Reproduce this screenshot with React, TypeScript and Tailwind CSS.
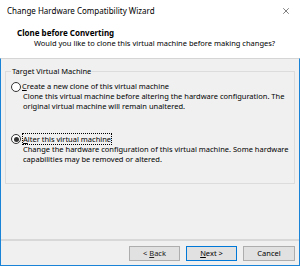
import { X } from "lucide-react";

export default function App() {
  return (
    <div className="flex h-[266px] w-[300px] flex-col bg-[#f0f0f0] font-['Segoe_UI','Noto_Sans',sans-serif] text-[7.5px] text-black">
      {/* title bar + wizard header */}
      <div className="h-[58px] bg-white">
        <div className="flex h-[22px] items-center justify-between pl-[7px] pr-[9px]">
          <span className="text-[8px]">Change Hardware Compatibility Wizard</span>
          <X size={10} strokeWidth={1.2} />
        </div>
        <div className="pl-[17px] pt-[5px] text-[8px] font-bold leading-[11px]">Clone before Converting</div>
        <div className="pl-[34px] leading-[11px]">
          Would you like to clone this virtual machine before making changes?
        </div>
      </div>

      <div className="flex flex-1 flex-col border-x border-b border-t border-x-[#1883d7] border-b-[#1883d7] border-t-[#d5d5d5]">
        <div className="px-[4px] pt-[7px]">
          <fieldset className="h-[118px] whitespace-nowrap border border-[#dcdcdc] px-[5px]">
            <legend className="px-[1px] leading-[10px]">Target Virtual Machine</legend>

            <label className="mt-[5px] flex items-center gap-[1px]">
              <span className="h-[10px] w-[10px] rounded-full border border-[#333] bg-white" />
              <span className="leading-[11px]">
                <u>C</u>reate a new clone of this virtual machine
              </span>
            </label>
            <p className="pl-[12px] leading-[9.5px]">
              Clone this virtual machine before altering the hardware configuration. The
              <br />
              original virtual machine will remain unaltered.
            </p>

            <label className="mt-[22px] flex items-center gap-[1px]">
              <span className="flex h-[10px] w-[10px] items-center justify-center rounded-full border border-[#333] bg-white">
                <span className="h-[5px] w-[5px] rounded-full bg-[#333]" />
              </span>
              <span className="border border-dotted border-black leading-[10px]">
                <u>A</u>lter this virtual machine
              </span>
            </label>
            <p className="pl-[12px] leading-[9.5px]">
              Change the hardware configuration of this virtual machine. Some hardware
              <br />
              capabilities may be removed or altered.
            </p>
          </fieldset>
        </div>

        <div className="flex-1" />

        <div className="border-t-2 border-[#d8d8d8] pb-[4px] pt-[5px]">
          <div className="flex justify-end gap-[6px] pr-[4px]">
            <button className="h-[15px] w-[51px] border border-[#adadad] bg-[#e1e1e1] leading-[13px] text-[#222]">
              &lt; <u>B</u>ack
            </button>
            <button className="h-[15px] w-[51px] border border-[#0078d7] bg-[#e1e1e1] leading-[13px]">
              <u>N</u>ext &gt;
            </button>
            <button className="h-[15px] w-[52px] border border-[#adadad] bg-[#e1e1e1] leading-[13px]">
              Cancel
            </button>
          </div>
        </div>
      </div>
    </div>
  );
}
